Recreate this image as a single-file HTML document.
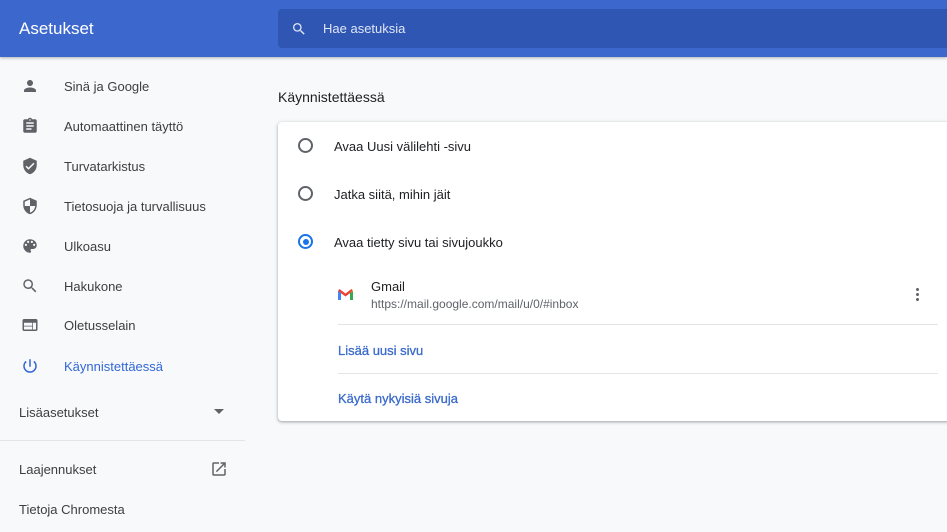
<!DOCTYPE html>
<html><head><meta charset="utf-8"><style>
*{margin:0;padding:0;box-sizing:border-box}
body{width:947px;height:532px;overflow:hidden;background:#f8f9fa;font-family:"Liberation Sans",Arial,sans-serif;color:#202124;position:relative}
.hdr{position:absolute;left:0;top:0;width:947px;height:57px;background:#3c68cd;box-shadow:0 1px 3px rgba(0,0,0,.3)}
.hdr .t{position:absolute;left:19px;top:19px;color:#fff;font-size:17px}
.search{position:absolute;left:278px;top:9px;width:669px;height:39px;background:#2f56b3;border-radius:4px 0 0 4px}
.search .p{position:absolute;left:45px;top:12px;color:#dfe6f6;font-size:13px}
.item{position:absolute;left:0;height:40px;width:245px;font-size:13px;color:#3c4043}
.item svg{position:absolute;left:21px;top:11px;width:18px;height:18px;fill:#5f6368}
.item span{position:absolute;left:64px;top:13px}
.act{color:#3367d6}.act svg{fill:#3367d6}
.sec{position:absolute;left:19px;font-size:13px;color:#3c4043}
.line{position:absolute;height:1px;background:#e3e4e6}
.h{position:absolute;left:278px;top:89px;font-size:14px;color:#202124}
.card{position:absolute;left:278px;top:122px;width:680px;height:299px;background:#fff;border-radius:4px;box-shadow:0 1px 2px rgba(60,64,67,.3),0 1px 3px 1px rgba(60,64,67,.15)}
.r{position:absolute;left:20px;width:15px;height:15px;border:2px solid #5f6368;border-radius:50%}
.r.on{border-color:#1a73e8}.r.on:after{content:"";position:absolute;left:2.5px;top:2.5px;width:6px;height:6px;border-radius:50%;background:#1a73e8}
.rl{position:absolute;left:56px;font-size:13px;color:#202124}
.lk{position:absolute;left:60px;font-size:13px;color:#3b6bcb;font-weight:normal;-webkit-text-stroke:0.3px #3b6bcb}
</style></head><body>
<div class="hdr"><div class="t">Asetukset</div>
<div class="search"><svg style="position:absolute;left:13px;top:12px" width="16" height="16" viewBox="0 0 24 24"><path fill="#dfe6f6" d="M15.5 14h-.79l-.28-.27A6.47 6.47 0 0016 9.5 6.5 6.5 0 109.5 16c1.61 0 3.09-.59 4.23-1.570l.27.28v.79l5 4.99L20.49 19l-4.99-5zm-6 0C7.01 14 5 11.99 5 9.5S7.01 5 9.5 5 14 7.01 14 9.5 11.99 14 9.5 14z"/></svg><div class="p">Hae asetuksia</div></div></div>

<div class="item" style="top:66px"><svg viewBox="0 0 24 24"><path d="M12 12c2.2 0 4-1.8 4-4s-1.8-4-4-4-4 1.8-4 4 1.8 4 4 4zm0 2c-2.7 0-8 1.3-8 4v2h16v-2c0-2.7-5.3-4-8-4z"/></svg><span>Sinä ja Google</span></div>
<div class="item" style="top:106px"><svg viewBox="0 0 24 24"><path d="M19 3h-4.2C14.4 1.8 13.3 1 12 1s-2.4.8-2.8 2H5c-1.1 0-2 .9-2 2v14c0 1.1.9 2 2 2h14c1.1 0 2-.9 2-2V5c0-1.1-.9-2-2-2zm-7 0c.6 0 1 .4 1 1s-.4 1-1 1-1-.4-1-1 .4-1 1-1zm2 14H7v-2h7v2zm3-4H7v-2h10v2zm0-4H7V7h10v2z"/></svg><span>Automaattinen täyttö</span></div>
<div class="item" style="top:146px"><svg viewBox="0 0 24 24"><path d="M12 1L3 5v6c0 5.5 3.8 10.7 9 12 5.2-1.3 9-6.5 9-12V5l-9-4zm-2 16l-4-4 1.4-1.4 2.6 2.6 6.6-6.6L18 9l-8 8z"/></svg><span>Turvatarkistus</span></div>
<div class="item" style="top:186px"><svg viewBox="0 0 24 24"><path d="M12 1L3 5v6c0 5.5 3.8 10.7 9 12 5.2-1.3 9-6.5 9-12V5l-9-4zm0 11h7c-.5 4.1-3.3 7.8-7 8.9V12H5V6.3l7-3.1V12z"/></svg><span>Tietosuoja ja turvallisuus</span></div>
<div class="item" style="top:226px"><svg viewBox="0 0 24 24"><path d="M12 3a9 9 0 000 18c.8 0 1.5-.7 1.5-1.5 0-.4-.1-.7-.4-1-.2-.3-.4-.6-.4-1 0-.8.7-1.5 1.5-1.5H16c2.8 0 5-2.2 5-5 0-4.4-4-8-9-8zm-5.5 9a1.5 1.5 0 110-3 1.5 1.5 0 010 3zm3-4a1.5 1.5 0 110-3 1.5 1.5 0 010 3zm5 0a1.5 1.5 0 110-3 1.5 1.5 0 010 3zm3 4a1.5 1.5 0 110-3 1.5 1.5 0 010 3z"/></svg><span>Ulkoasu</span></div>
<div class="item" style="top:266px"><svg viewBox="0 0 24 24"><path d="M15.5 14h-.79l-.28-.27A6.47 6.47 0 0016 9.5 6.5 6.5 0 109.5 16c1.61 0 3.09-.59 4.23-1.57l.27.28v.79l5 4.99L20.49 19l-4.99-5zm-6 0C7.01 14 5 11.990 5 9.5S7.01 5 9.5 5 14 7.01 14 9.5 11.99 14 9.5 14z"/></svg><span>Hakukone</span></div>
<div class="item" style="top:305px"><svg viewBox="0 0 24 24"><path d="M20 4H4c-1.1 0-2 .9-2 2v12c0 1.1.9 2 2 2h16c1.1 0 2-.9 2-2V6c0-1.1-.9-2-2-2zm-5 14H4v-4h11v4zm0-5H4V9h11v4zm5 5h-4V9h4v9z"/></svg><span>Oletusselain</span></div>
<div class="item act" style="top:346px"><svg viewBox="0 0 24 24"><path d="M13 3h-2v10h2V3zm4.8 2.2l-1.4 1.4A7 7 0 0119 12a7 7 0 11-11.4-5.4L6.2 5.2A9 9 0 1017.8 5.2z"/></svg><span>Käynnistettäessä</span></div>
<div class="sec" style="top:405px">Lisäasetukset</div>
<svg style="position:absolute;left:214px;top:409px" width="10" height="6"><path d="M0 0h10L5 5z" fill="#5f6368"/></svg>
<div class="line" style="left:0;top:440px;width:245px"></div>
<div class="sec" style="top:462px">Laajennukset</div>
<svg style="position:absolute;left:210px;top:460px" width="18" height="18" viewBox="0 0 24 24"><path fill="#5f6368" d="M19 19H5V5h7V3H5a2 2 0 00-2 2v14a2 2 0 002 2h14c1.1 0 2-.9 2-2v-7h-2v7zM14 3v2h3.6l-9.8 9.8 1.4 1.4L19 6.4V10h2V3h-7z"/></svg>
<div class="sec" style="top:502px">Tietoja Chromesta</div>

<div class="h">Käynnistettäessä</div>
<div class="card">
<div class="r" style="top:16px"></div><div class="rl" style="top:17px">Avaa Uusi välilehti -sivu</div>
<div class="r" style="top:64px"></div><div class="rl" style="top:65px">Jatka siitä, mihin jäit</div>
<div class="r on" style="top:112px"></div><div class="rl" style="top:113px">Avaa tietty sivu tai sivujoukko</div>
<svg style="position:absolute;left:60px;top:167px" width="15" height="11" viewBox="0 0 15 11"><path d="M0 2v9h3V4z" fill="#4285f4"/><path d="M12 4v7h3V2z" fill="#34a853"/><path d="M0 2l7.5 5.5L15 2 13.5 0 7.5 4.5 1.5 0z" fill="#ea4335"/><path d="M12 4l3-2V1z" fill="#fbbc04"/></svg>
<div style="position:absolute;left:93px;top:157px;font-size:13px">Gmail</div>
<div style="position:absolute;left:93px;top:175px;font-size:12px;color:#5f6368">https://mail.google.com/mail/u/0/#inbox</div>
<div style="position:absolute;left:638px;top:166px;width:3px">
<div style="width:3px;height:3px;border-radius:50%;background:#5f6368;margin-bottom:2px"></div><div style="width:3px;height:3px;border-radius:50%;background:#5f6368;margin-bottom:2px"></div><div style="width:3px;height:3px;border-radius:50%;background:#5f6368"></div></div>
<div class="line" style="left:60px;top:202px;width:600px"></div>
<div class="lk" style="top:221px">Lisää uusi sivu</div>
<div class="line" style="left:60px;top:251px;width:600px"></div>
<div class="lk" style="top:269px">Käytä nykyisiä sivuja</div>
</div>
</body></html>
